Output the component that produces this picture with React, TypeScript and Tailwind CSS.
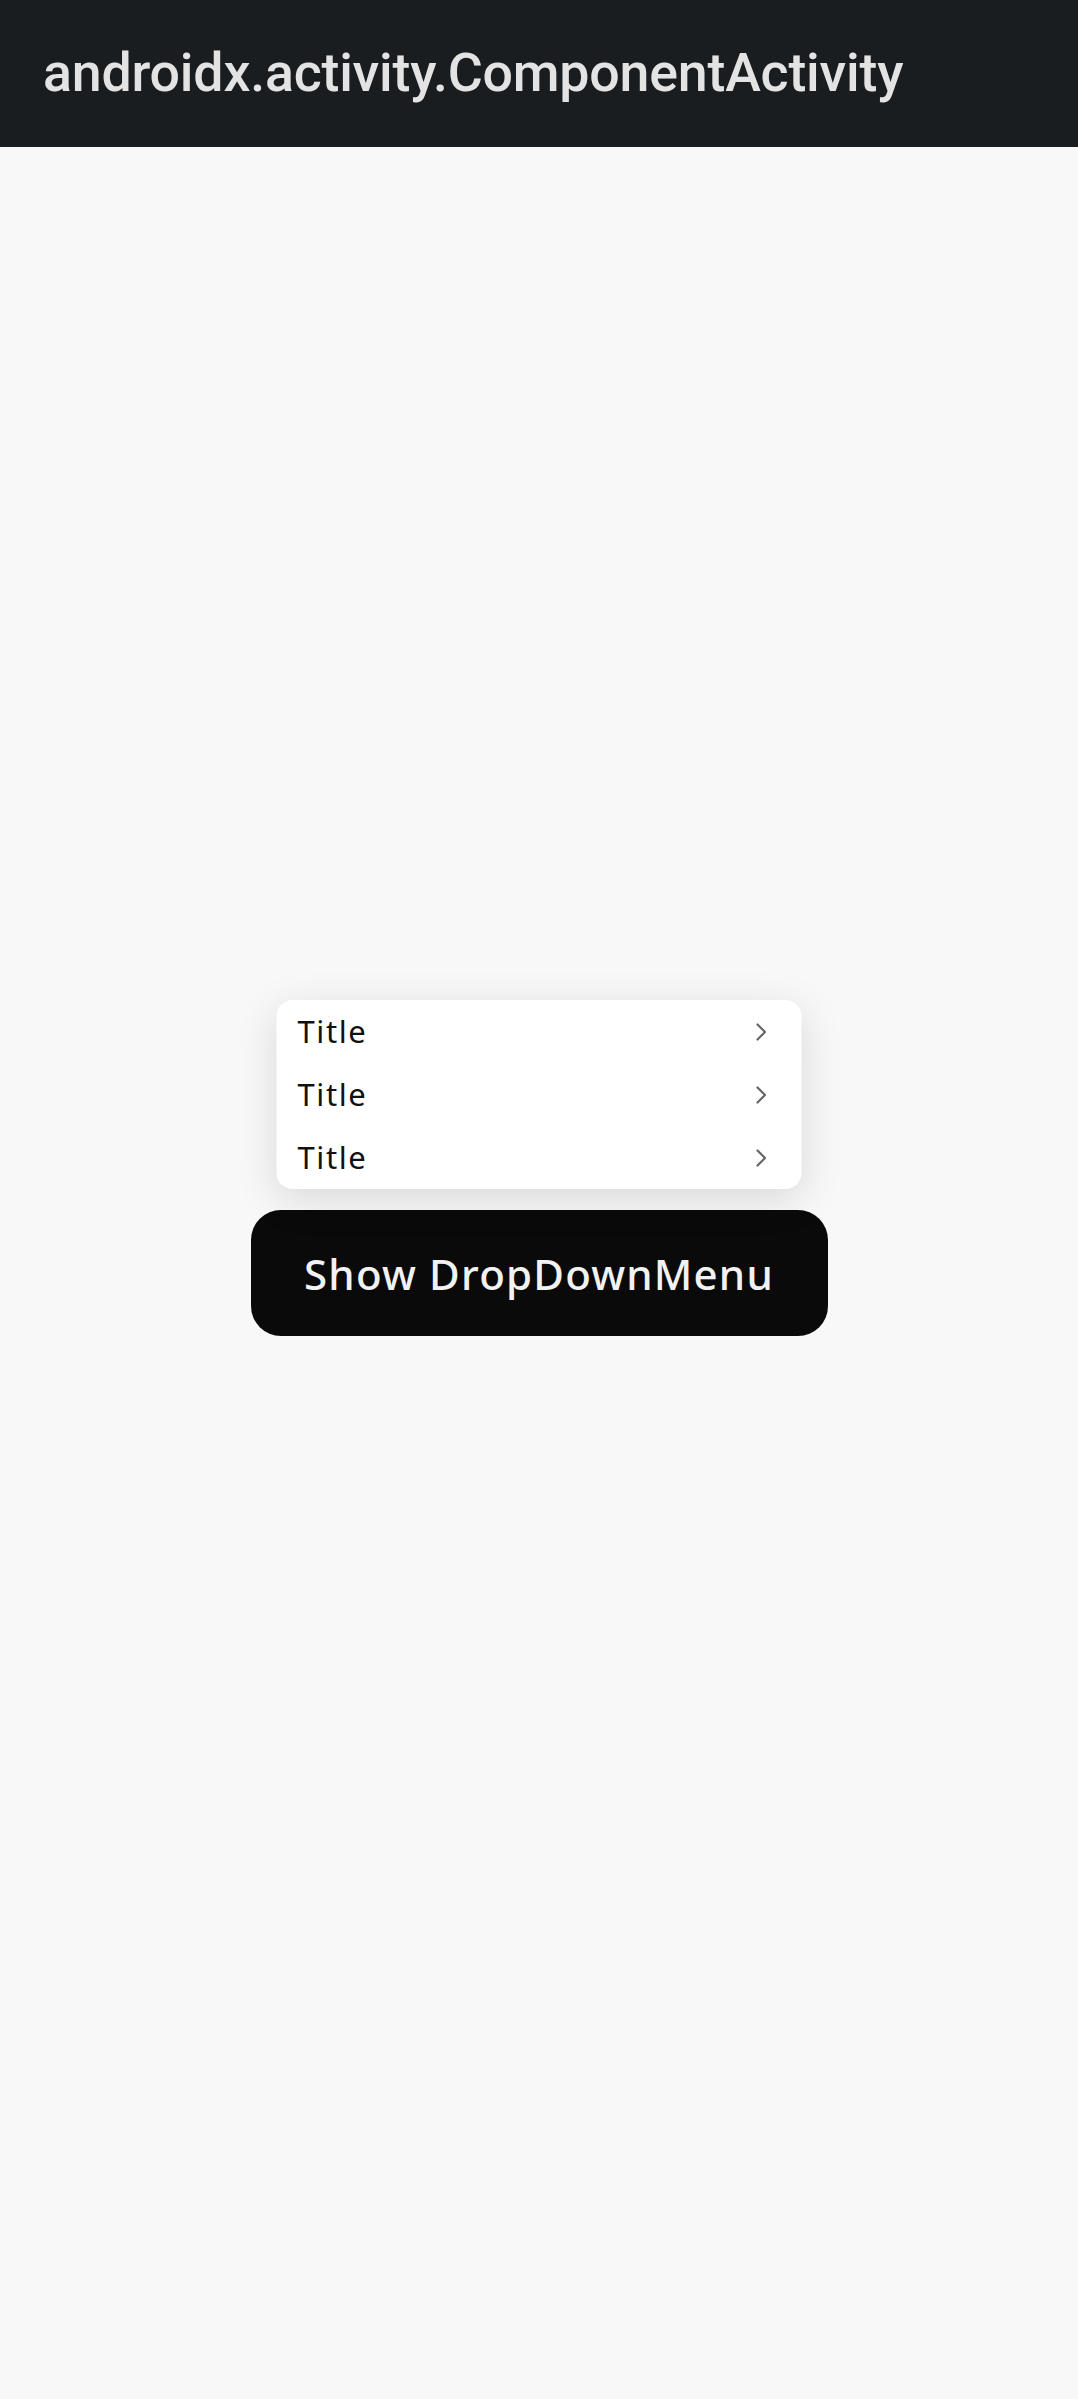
import React from "react";

const items = ["Title", "Title", "Title"];

const Chevron = () => (
    <svg width="12" height="20" viewBox="0 0 12 20" fill="none">
        <path d="M2 2.5l7.5 7.5L2 17.5" stroke="#666666" strokeWidth="2.2" strokeLinecap="round" strokeLinejoin="round" />
    </svg>
);

export default function App() {
    return (
        <div className="flex flex-col h-screen bg-[#f8f8f8]">
            <header className="h-[147px] shrink-0 bg-[#1a1d20] flex items-center px-[43px]">
                <h1 className="text-[53.7px] font-medium text-[#e3e3e3] font-['Roboto',sans-serif] tracking-[-0.2px]">
                    androidx.activity.ComponentActivity
                </h1>
            </header>
            <main className="flex-1 flex items-center justify-center">
                <div className="relative">
                    <div className="absolute bottom-full left-1/2 -translate-x-1/2 mb-[21px] w-[525px] bg-white rounded-[16px] shadow-[0_10px_40px_rgba(0,0,0,0.13)]">
                        {items.map((t, i) => (
                            <div key={i} className="h-[63px] flex items-center justify-between pl-[21px] pr-[34px]">
                                <span className="text-[31px] font-normal tracking-[1.6px] text-[#111111] font-['Noto_Sans',sans-serif]">{t}</span>
                                <Chevron />
                            </div>
                        ))}
                    </div>
                    <button className="w-[577px] h-[126px] bg-[#0a0a0a] rounded-[30px] text-[#f2f2f2] text-[42px] font-medium tracking-[1.2px] font-['Noto_Sans',sans-serif]">
                        Show DropDownMenu
                    </button>
                </div>
            </main>
        </div>
    );
}
